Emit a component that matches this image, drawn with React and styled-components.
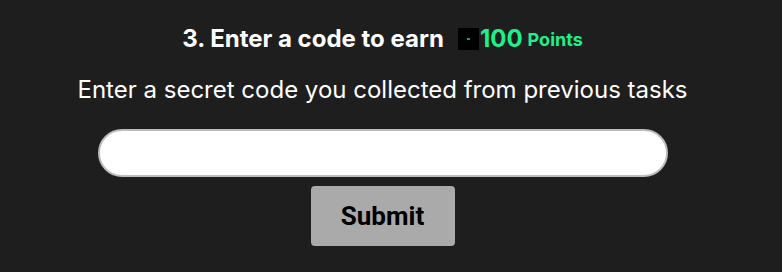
import React, { useState } from "react";
import styled, { createGlobalStyle } from "styled-components";

const GlobalStyle = createGlobalStyle`
  html, body {
    margin: 0;
    padding: 0;
    background: #1e1e1e;
  }
  body {
    font-family: Inter, "Noto Sans", sans-serif;
  }
`;

export default function App() {
  const [code, setCode] = useState("");
  return (
    <>
      <GlobalStyle />
      <Task>
        <Title>
          <span>3. Enter a code to earn</span>
          <Reward>
            <Badge>
              <i />
            </Badge>
            <Amount>100</Amount>
            <Unit>Points</Unit>
          </Reward>
        </Title>
        <Hint>Enter a secret code you collected from previous tasks</Hint>
        <CodeInput
          type="text"
          value={code}
          onChange={(e) => setCode(e.target.value)}
        />
        <SubmitButton>Submit</SubmitButton>
      </Task>
    </>
  );
}

const Task = styled.div`
  width: 765px;
  height: 272px;
  box-sizing: border-box;
  padding-top: 22px;
  display: flex;
  flex-direction: column;
  align-items: center;
`;

const Title = styled.h2`
  margin: 0;
  display: flex;
  align-items: center;
  gap: 14px;
  color: #ffffff;
  font-size: 24px;
  font-weight: 700;
  line-height: 30px;
`;

const Reward = styled.div`
  display: flex;
  align-items: center;
`;

const Badge = styled.div`
  flex: 0 0 21px;
  width: 21px;
  height: 22px;
  background: #000;
  display: flex;
  align-items: center;
  justify-content: center;
  i {
    width: 3px;
    height: 2px;
    background: #19a55e;
  }
`;

const Amount = styled.span`
  color: #1ef08a;
  font-size: 24px;
  font-weight: 700;
  margin-left: 1px;
`;

const Unit = styled.span`
  color: #1ef08a;
  font-size: 18px;
  font-weight: 700;
  margin-left: 5px;
  margin-top: 3px;
`;

const Hint = styled.p`
  margin: 21px 0 0;
  color: #ffffff;
  font-size: 24px;
  font-weight: 400;
  line-height: 28px;
`;

const CodeInput = styled.input`
  margin-top: 25px;
  width: 570px;
  height: 48px;
  box-sizing: border-box;
  border: 2px solid #bdbdbd;
  border-radius: 24px;
  background: #ffffff;
  outline: none;
  padding: 0 20px;
  font-size: 18px;
  font-family: Inter, sans-serif;
`;

const SubmitButton = styled.button`
  margin-top: 9px;
  width: 144px;
  height: 60px;
  border: none;
  border-radius: 4px;
  background: #aaaaaa;
  color: #000000;
  font-family: Roboto, "Liberation Sans", sans-serif;
  font-size: 26px;
  font-weight: 700;
  cursor: pointer;
`;
